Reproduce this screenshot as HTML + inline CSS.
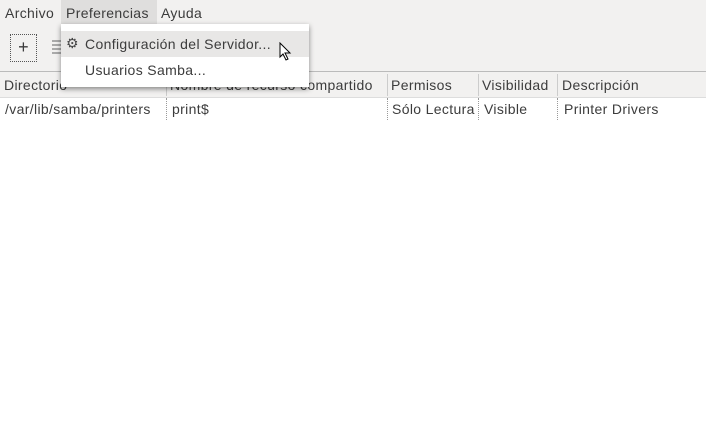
<!DOCTYPE html>
<html><head><style>
body{margin:0;width:706px;height:436px;background:#f2f1f0;font-family:"Liberation Sans",sans-serif;font-size:14px;letter-spacing:0.35px;color:#3c3c3c;position:relative;overflow:hidden}
.a{position:absolute;white-space:nowrap}
</style></head><body>
<div class="a" style="left:61px;top:0;width:96px;height:25px;background:#dfdedd"></div>
<div class="a" style="left:5px;top:5px">Archivo</div>
<div class="a" style="left:66px;top:5px">Preferencias</div>
<div class="a" style="left:161px;top:5px">Ayuda</div>
<div class="a" style="left:10px;top:34px;width:25px;height:26px;border:1px dotted #555;text-align:center;line-height:25px;font-size:18px">+</div>
<div class="a" style="left:52px;top:40px;width:10px;height:14px;background:repeating-linear-gradient(#aaa 0 2px,transparent 2px 4px)"></div>
<div class="a" style="left:0;top:71px;width:706px;height:365px;background:#fff;border-top:1px solid #bbb"></div>
<div class="a" style="left:0;top:72px;width:706px;height:25px;background:#f2f1f0;border-bottom:1px solid #ddd"></div>
<div class="a" style="left:166px;top:74px;height:22px;border-left:1px solid #ccc"></div>
<div class="a" style="left:387px;top:74px;height:22px;border-left:1px solid #ccc"></div>
<div class="a" style="left:478px;top:74px;height:22px;border-left:1px solid #ccc"></div>
<div class="a" style="left:557px;top:74px;height:22px;border-left:1px solid #ccc"></div>
<div class="a" style="left:4px;top:77px">Directorio</div>
<div class="a" style="left:170px;top:77px">Nombre de recurso compartido</div>
<div class="a" style="left:391px;top:77px">Permisos</div>
<div class="a" style="left:482px;top:77px">Visibilidad</div>
<div class="a" style="left:562px;top:77px">Descripción</div>
<div class="a" style="left:166px;top:98px;height:22px;border-left:1px dotted #999"></div>
<div class="a" style="left:387px;top:98px;height:22px;border-left:1px dotted #999"></div>
<div class="a" style="left:478px;top:98px;height:22px;border-left:1px dotted #999"></div>
<div class="a" style="left:557px;top:98px;height:22px;border-left:1px dotted #999"></div>
<div class="a" style="left:5px;top:101px">/var/lib/samba/printers</div>
<div class="a" style="left:172px;top:101px">print$</div>
<div class="a" style="left:392px;top:101px">Sólo Lectura</div>
<div class="a" style="left:484px;top:101px">Visible</div>
<div class="a" style="left:564px;top:101px">Printer Drivers</div>
<div class="a" style="left:61px;top:24px;width:248px;height:63px;background:#fff;box-shadow:0 2px 5px rgba(0,0,0,.45)"></div>
<div class="a" style="left:61px;top:31px;width:248px;height:26px;background:#e8e7e6"></div>
<div class="a" style="left:66px;top:35px;font-size:14px;color:#444">⚙</div>
<div class="a" style="left:85px;top:36px">Configuración del Servidor...</div>
<div class="a" style="left:85px;top:62px">Usuarios Samba...</div>
<svg class="a" style="left:279px;top:42px" width="14" height="20"><path d="M1 1 L1 15 L4 12 L7 18 L9 17 L6 11 L11 11 Z" fill="#fff" stroke="#000" stroke-width="1"/></svg>
</body></html>
